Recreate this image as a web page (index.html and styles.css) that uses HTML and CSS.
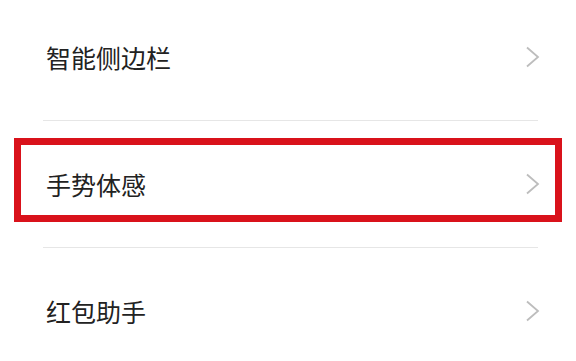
FILE: index.html
```html
<!DOCTYPE html>
<html lang="zh-CN">
<head>
<meta charset="utf-8">
<title>设置</title>
<link rel="stylesheet" href="styles.css">
</head>
<body>
<div class="list">
  <div class="row">
    <span class="label">智能侧边栏</span>
    <svg class="chev" width="16" height="22" viewBox="0 0 16 22"><polyline points="2,1.5 13,11 2,20.5" fill="none" stroke="#bdbdbd" stroke-width="1.8" stroke-linejoin="miter"/></svg>
  </div>
  <div class="divider"></div>
  <div class="row highlighted">
    <span class="label">手势体感</span>
    <svg class="chev" width="16" height="22" viewBox="0 0 16 22"><polyline points="2,1.5 13,11 2,20.5" fill="none" stroke="#bdbdbd" stroke-width="1.8" stroke-linejoin="miter"/></svg>
  </div>
  <div class="divider"></div>
  <div class="row">
    <span class="label">红包助手</span>
    <svg class="chev" width="16" height="22" viewBox="0 0 16 22"><polyline points="2,1.5 13,11 2,20.5" fill="none" stroke="#bdbdbd" stroke-width="1.8" stroke-linejoin="miter"/></svg>
  </div>
</div>
</body>
</html>
```
FILE: styles.css
```css
html, body {
  margin: 0;
  padding: 0;
  background: #ffffff;
  overflow: hidden;
}
body {
  width: 576px;
  height: 361px;
  font-family: "Noto Sans CJK SC", "Noto Sans", sans-serif;
  color: #222222;
}
.list {
  margin-top: -6px;
  display: flex;
  flex-direction: column;
}
.row {
  position: relative;
  height: 126px;
  display: flex;
  align-items: center;
  justify-content: space-between;
  padding: 0 36px 0 46px;
}
.label {
  font-size: 25px;
  line-height: 1;
  letter-spacing: 0;
}
.chev {
  display: block;
  margin-right: -1px;
}
.divider {
  height: 1px;
  background: #e6e6e6;
  margin: 0 38px 0 43px;
}
.highlighted::after {
  content: "";
  position: absolute;
  left: 14px;
  top: 17px;
  width: 548px;
  height: 84px;
  box-sizing: border-box;
  border: 7px solid #d9121b;
}
```
